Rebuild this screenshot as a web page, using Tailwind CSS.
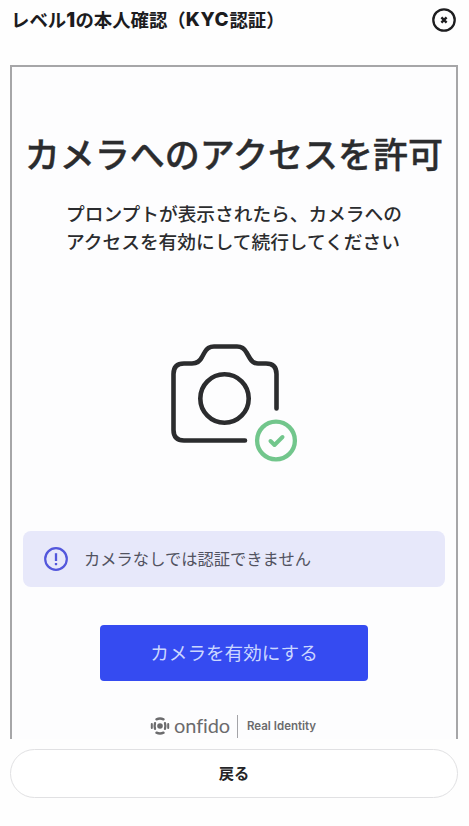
<!DOCTYPE html>
<html lang="ja">
<head>
<meta charset="utf-8">
<title>KYC認証</title>
<script src="https://cdn.jsdelivr.net/npm/@tailwindcss/browser@4"></script>
</head>
<body class="bg-[#fefefe] font-['Noto_Sans_CJK_JP',sans-serif] text-[#2b2c2e]">
<div class="flex h-[826px] w-[469px] flex-col overflow-hidden">
  <header class="flex h-[65px] shrink-0 items-start justify-between pt-[7px] pr-[13px] pl-[11px]">
    <h1 class="flex h-[26px] items-center font-['Inter','Noto_Sans_CJK_JP',sans-serif] text-[18.4px] leading-[26px] font-bold whitespace-nowrap text-[#1c1c1e]">レベル<span class="text-[19.500px] font-black tracking-[0.4px]">1</span>の本人確認（<span class="text-[19px] font-extrabold tracking-[0.7px]">KYC</span>認証）</h1>
    <button aria-label="閉じる" class="mt-px size-6">
      <svg viewBox="0 0 24 24" class="size-6" fill="none" stroke="#1d1d1f"><circle cx="12" cy="12" r="10.7" stroke-width="2.3"/><path d="M9.4 9.4l5.2 5.2M14.6 9.4l-5.2 5.2" stroke-width="2.4"/></svg>
    </button>
  </header>

  <main class="mx-[10px] flex h-[674px] w-[448px] shrink-0 flex-col items-center border-x-2 border-t-2 border-[#a6a6a8] bg-[#fdfdfe]">
    <h2 class="mt-[60px] h-[52px] text-[35px] leading-[52px] font-medium whitespace-nowrap [-webkit-text-stroke:0.4px_#2b2c2e]">カメラへのアクセスを許可</h2>
    <p class="mt-[20px] h-[56px] text-[18.7px] leading-[28px] font-medium whitespace-nowrap">プロンプトが表示されたら、カメラへの<br>アクセスを有効にして続行してください</p>
    <svg viewBox="0 0 130 120" class="mt-[85px] ml-[2px] h-[120px] w-[130px] overflow-visible" fill="none" stroke-linecap="round" stroke-linejoin="round">
      <g stroke="#2b2c2e" stroke-width="4.6">
        <path d="M75 100.500H14Q3.500 100.500 3.500 90V34Q3.500 23.500 14 23.500H22Q29 23.500 32 17L34.500 12.500Q37.500 6.500 44 6.500H67Q73.500 6.500 76.500 12.500L80 18.500Q83 23.500 88 23.500H96Q106.500 23.500 106.500 34V68.500"/>
        <circle cx="54.500" cy="58.500" r="24.200"/>
      </g>
      <g stroke="#72c68c"><circle cx="106" cy="100.500" r="18.900" stroke-width="4.300"/><path d="M100.500 101L104.500 105L112.500 97" stroke-width="4"/></g>
    </svg>
    <div class="mt-[71px] flex h-[56px] w-[422px] shrink-0 items-center rounded-lg bg-[#e7e8fa] pl-[21px]">
      <svg viewBox="0 0 24 24" class="size-6" fill="none" stroke="#5357dc"><circle cx="12" cy="12" r="10.800" stroke-width="2.200"/><path d="M12 6.200V14" stroke-width="2.300"/><path d="M12 16V18.200" stroke-width="2.300"/></svg>
      <span class="mb-[2px] ml-4 text-[16.3px] leading-6 whitespace-nowrap text-[#515260]">カメラなしでは認証できません</span>
    </div>
    <button class="mt-[38px] h-[56px] w-[268px] shrink-0 rounded-[4px] bg-[#354bf1] pb-[2px] text-[18.6px] whitespace-nowrap text-[#cbd7ff]">カメラを有効にする</button>
    <div class="mt-[33px] flex h-[24px] w-[168px] shrink-0 items-center text-[#6b6b6d]">
      <svg viewBox="0 0 20 20" class="size-[20px] shrink-0" fill="none" stroke="currentColor" stroke-linecap="round">
        <circle cx="10" cy="10" r="2.800" fill="currentColor" stroke="none"/>
        <path d="M6.500 3.300Q10 1.600 13.500 3.300M6.500 16.700Q10 18.400 13.500 16.700" stroke-width="2.500"/>
        <path d="M1.800 8V12M18.200 8V12" stroke-width="2"/>
        <path d="M5 7.200Q4.200 10 5 12.800M15 7.200Q15.800 10 15 12.800" stroke-width="2.300"/>
      </svg>
      <span class="mb-[2px] ml-[4px] w-[56px] font-['Lato',sans-serif] text-[20px] leading-6 tracking-[-0.1px] whitespace-nowrap [font-variant-ligatures:none]">onfido</span>
      <span class="ml-[7px] h-[23px] w-px shrink-0 bg-[#a4a4a8]"></span>
      <span class="ml-[9px] font-['Inter',sans-serif] text-[11.500px] leading-6 font-semibold whitespace-nowrap">Real Identity</span>
    </div>
  </main>

  <button class="mx-[10px] mt-[10px] h-[49px] w-[448px] shrink-0 rounded-full border-[1.500px] border-[#e1e1e3] bg-white pb-[2px] text-[15.300px] font-bold text-[#252527]">戻る</button>
</div>
</body>
</html>
